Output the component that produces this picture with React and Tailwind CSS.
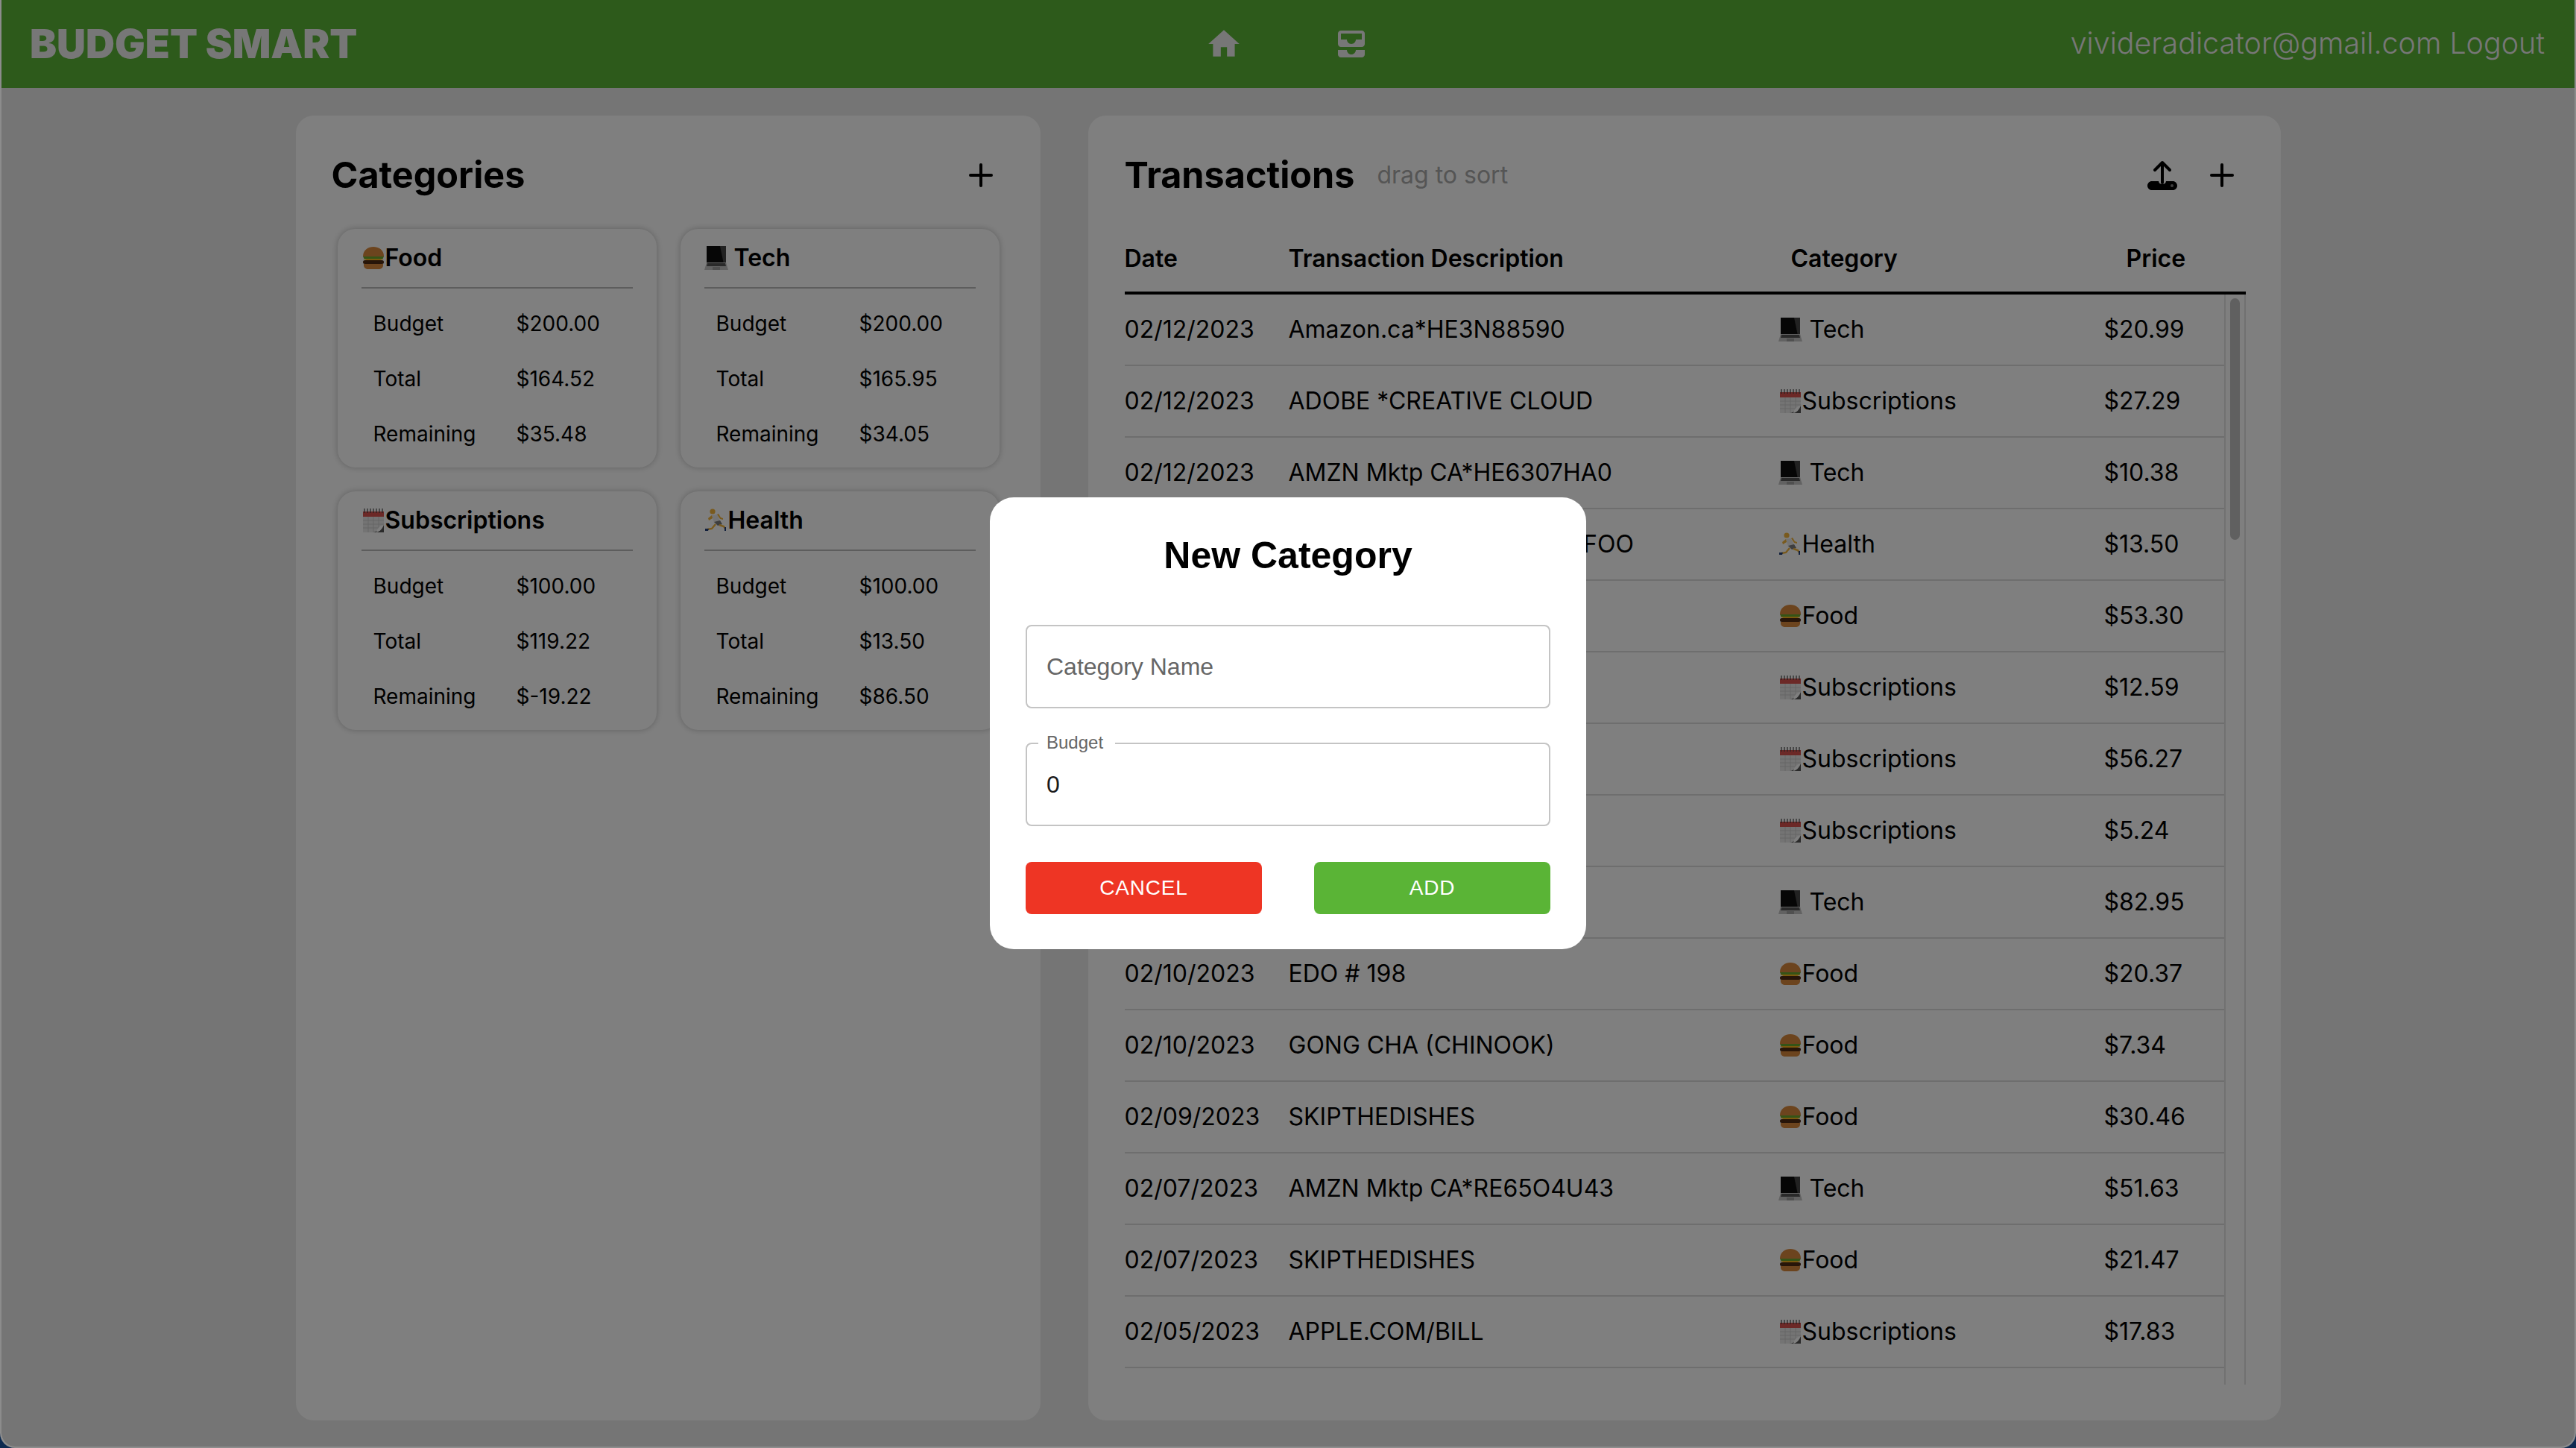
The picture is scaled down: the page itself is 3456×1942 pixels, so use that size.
import { Plus } from 'lucide-react';
import { MdHome, MdAllInbox } from 'react-icons/md';

const Burger = () => (
  <svg width="32" height="32" viewBox="0 0 32 32" className="inline-block shrink-0">
    <path d="M2 14C2 5 9 1 16 1s14 4 14 13z" fill="#d9893c" />
    <path d="M2 14h28l-2 4H4z" fill="#6aa82e" />
    <path d="M2 17h28l-7 3-3-1-4 2-4-2-3 1z" fill="#f4b51c" />
    <rect x="2" y="19" width="28" height="5" rx="2.500" fill="#4f2a12" />
    <path d="M3 24h26v2c0 3-3 5-6 5H9c-3 0-6-2-6-5z" fill="#d9893c" />
  </svg>
);

const Laptop = () => (
  <svg width="32" height="32" viewBox="0 0 32 32" className="inline-block shrink-0">
    <path d="M3 0h26v24H3z" fill="#0c0c0c" />
    <path d="M21 0h8v24h-3z" fill="#444444" />
    <path d="M3 22h26l3 10H0z" fill="#c4c4c4" />
    <path d="M4 23h24l1 4H3z" fill="#555555" />
    <rect x="11" y="28" width="10" height="4" fill="#a0a0a0" />
  </svg>
);

const Calendar = () => (
  <svg width="32" height="32" viewBox="-2 0 32 32" className="inline-block shrink-0">
    <path d="M0 4h28v28H0z" fill="#e8e8e8" />
    <path d="M0 4h28v7H0z" fill="#d9534f" />
    <path d="M2 0v6M6 0v6M10 0v6M14 0v6M18 0v6M22 0v6M26 0v6" stroke="#444444" strokeWidth="1.2" />
    <path d="M0 16h28M0 21h28M0 26h28M7 11v21M14 11v21M21 11v21" stroke="#cccccc" strokeWidth="1" />
    <path d="M14 32c6-1 8-6 14-10v10z" fill="#555555" />
    <path d="M28 22c-6 1-9 5-10 10 5-1 8-5 10-10z" fill="#ffffff" />
  </svg>
);

const Runner = () => (
  <svg width="32" height="32" viewBox="0 0 32 32" className="inline-block shrink-0">
    <circle cx="11" cy="4" r="3.600" fill="#f2b53c" />
    <path d="M10 9l7-1 4 9-8 2z" fill="#e8e8e8" />
    <path d="M10 9l-5 4 1 3 5-3zM17 8l4 6 4 1v-2l-3-1-3-5z" fill="#f2b53c" />
    <path d="M13 18l8-2 3 5-6 2z" fill="#7c7c7c" />
    <path d="M20 22l6 2 2 3M15 21l-5 6-6 1" stroke="#f2b53c" strokeWidth="2.400" fill="none" />
    <path d="M1 27h5l-1 3H1zM27 25h2v5h-2z" fill="#24407a" />
  </svg>
);

const icons = {
  Food: <Burger />,
  Tech: <Laptop />,
  Subscriptions: <Calendar />,
  Health: <Runner />,
};

const categories = [
  { name: 'Food', budget: '$200.00', total: '$164.52', remaining: '$35.48' },
  { name: 'Tech', budget: '$200.00', total: '$165.95', remaining: '$34.05' },
  { name: 'Subscriptions', budget: '$100.00', total: '$119.22', remaining: '$-19.22' },
  { name: 'Health', budget: '$100.00', total: '$13.50', remaining: '$86.50' },
];

const transactions = [
  ['02/12/2023', 'Amazon.ca*HE3N88590', 'Tech', '$20.99'],
  ['02/12/2023', 'ADOBE *CREATIVE CLOUD', 'Subscriptions', '$27.29'],
  ['02/12/2023', 'AMZN Mktp CA*HE6307HA0', 'Tech', '$10.38'],
  ['02/12/2023', 'SQ *VITAMINS STORES & FOO', 'Health', '$13.50'],
  ['02/11/2023', '', 'Food', '$53.30'],
  ['02/11/2023', '', 'Subscriptions', '$12.59'],
  ['02/11/2023', '', 'Subscriptions', '$56.27'],
  ['02/11/2023', '', 'Subscriptions', '$5.24'],
  ['02/10/2023', '', 'Tech', '$82.95'],
  ['02/10/2023', 'EDO # 198', 'Food', '$20.37'],
  ['02/10/2023', 'GONG CHA (CHINOOK)', 'Food', '$7.34'],
  ['02/09/2023', 'SKIPTHEDISHES', 'Food', '$30.46'],
  ['02/07/2023', 'AMZN Mktp CA*RE65O4U43', 'Tech', '$51.63'],
  ['02/07/2023', 'SKIPTHEDISHES', 'Food', '$21.47'],
  ['02/05/2023', 'APPLE.COM/BILL', 'Subscriptions', '$17.83'],
];

const UploadIcon = () => (
  <svg width="40" height="40" viewBox="0 0 40 40" className="shrink-0">
    <path d="M20 30V3M10 13L20 3l10 10" stroke="#000" strokeWidth="4" strokeLinecap="round" strokeLinejoin="round" fill="none" />
    <path d="M6 28h9c.5 3 2.500 4 5 4s4.500-1 5-4h9c3.300 0 6 2.700 6 6s-2.700 6-6 6H6c-3.300 0-6-2.700-6-6s2.700-6 6-6z" fill="#000" />
    <circle cx="33" cy="34" r="2" fill="#808080" />
  </svg>
);

const CategoryCard = ({ cat }) => (
  <div className="w-[428px] h-[320px] rounded-[24px] px-[32px] pt-[16px] bg-white shadow-[0_0_8px_rgba(0,0,0,0.25)]">
    <div className="h-[64px] pb-[16px] border-b-2 border-[#bbbbbb] text-[32px] font-semibold leading-[40px] whitespace-nowrap flex items-center">
      {icons[cat.name]}
      {cat.name === 'Tech' && <span className="w-[8px]" />}
      <span>{cat.name}</span>
    </div>
    <div className="pl-[16px] pt-[10px] text-[28px] text-black">
      {[
        ['Budget', cat.budget],
        ['Total', cat.total],
        ['Remaining', cat.remaining],
      ].map(([label, value]) => (
        <div key={label} className="h-[74px] flex items-center">
          <span className="w-[192px]">{label}</span>
          <span>{value}</span>
        </div>
      ))}
    </div>
  </div>
);

const App = () => {
  return (
    <div className="relative h-[1942px] w-full overflow-hidden bg-[#0e2a50] font-['Inter',sans-serif] text-black">
      <div className="relative h-full flex flex-col overflow-hidden rounded-b-[20px] border-x-2 border-b-2 border-[#8c8c8c] bg-[#ebebeb]">
        <header className="h-[118px] shrink-0 bg-[#5ab436] text-[#eeeeee] pl-[38px] pr-[40px] grid grid-cols-[1fr_auto_1fr] items-center">
          <div className="text-[54px] font-black leading-none">BUDGET SMART</div>
          <div className="flex items-center gap-[122px]">
            <MdHome size={50} />
            <MdAllInbox size={48} />
          </div>
          <div className="text-right text-[39.400px] font-light">vivideradicator@gmail.com Logout</div>
        </header>

        <main className="flex-1 flex justify-center gap-[64px] pt-[37px] pb-[35px]">
          <section className="w-[999px] rounded-[24px] bg-white px-[48px]">
            <div className="h-[152px] flex items-center justify-between pr-[8px] pt-[8px]">
              <h2 className="text-[48.500px] font-bold leading-none">Categories</h2>
              <Plus size={48} strokeWidth={2} />
            </div>
            <div className="grid grid-cols-[428px_428px] gap-[32px] pl-[8px]">
              {categories.map((cat) => (
                <CategoryCard key={cat.name} cat={cat} />
              ))}
            </div>
          </section>

          <section className="w-[1600px] rounded-[24px] bg-white pl-[49px] pr-[47px] flex flex-col">
            <div className="h-[152px] shrink-0 flex items-center pt-[8px]">
              <h2 className="text-[48.500px] font-bold leading-none">Transactions</h2>
              <span className="ml-[30px] text-[32px] text-[#aaaaaa]">drag to sort</span>
              <div className="ml-auto flex items-center gap-[36px] pr-[8px]">
                <UploadIcon />
                <Plus size={48} strokeWidth={2} />
              </div>
            </div>

            <div className="h-[88px] shrink-0 border-b-4 border-black grid grid-cols-[220px_674px_450px_1fr] items-start pt-[16px] text-[32px] font-semibold">
              <div>Date</div>
              <div>Transaction Description</div>
              <div>Category</div>
              <div>Price</div>
            </div>

            <div className="h-[1462px] shrink-0 flex items-stretch overflow-hidden">
              <div className="w-[1475px]">
                {transactions.map(([date, desc, cat, price], i) => (
                  <div key={i} className="h-[96px] border-b-2 border-[#dddddd] grid grid-cols-[220px_657px_437px_1fr] items-center text-[32px]">
                    <div>{date}</div>
                    <div className="whitespace-nowrap">{desc}</div>
                    <div className="flex items-center whitespace-nowrap">
                      {icons[cat]}
                      {cat === 'Tech' && <span className="w-[10px]" />}
                      <span>{cat}</span>
                    </div>
                    <div>{price}</div>
                  </div>
                ))}
              </div>
              <div className="w-[29px] h-[1462px] border-x-2 border-[#e2e2e2] px-[6px] pt-[5px]">
                <div className="h-[324px] rounded-full bg-[#c1c1c1]" />
              </div>
            </div>
          </section>
        </main>

        <div className="absolute inset-0 bg-black/50 flex items-center justify-center font-['Liberation_Sans',Arial,sans-serif]">
          <div className="w-[800px] h-[606px] rounded-[32px] bg-white px-[48px] pt-[46px]">
            <h2 className="text-[50px] font-bold leading-[64px] text-center text-black">New Category</h2>
            <input
              readOnly
              placeholder="Category Name"
              className="mt-[61px] block w-full h-[112px] rounded-[8px] border-2 border-[#c4c4c4] px-[26px] text-[32px] placeholder:text-[#666666] outline-none"
            />
            <div className="relative mt-[46px]">
              <input
                readOnly
                value="0"
                className="block w-full h-[112px] rounded-[8px] border-2 border-[#c4c4c4] px-[26px] text-[32px] text-[#1a1a1a] outline-none"
              />
              <span className="absolute left-[17px] -top-[15px] bg-white pl-[11px] pr-[16px] text-[24px] leading-[30px] text-[#666666]">Budget</span>
            </div>
            <div className="mt-[48px] flex justify-between">
              <button className="w-[317px] h-[70px] rounded-[8px] bg-[#ee3524] text-white text-[28px] tracking-[0.8px]">CANCEL</button>
              <button className="w-[317px] h-[70px] rounded-[8px] bg-[#5ab436] text-white text-[28px] tracking-[0.8px]">ADD</button>
            </div>
          </div>
        </div>
      </div>
    </div>
  );
};

export default App;
